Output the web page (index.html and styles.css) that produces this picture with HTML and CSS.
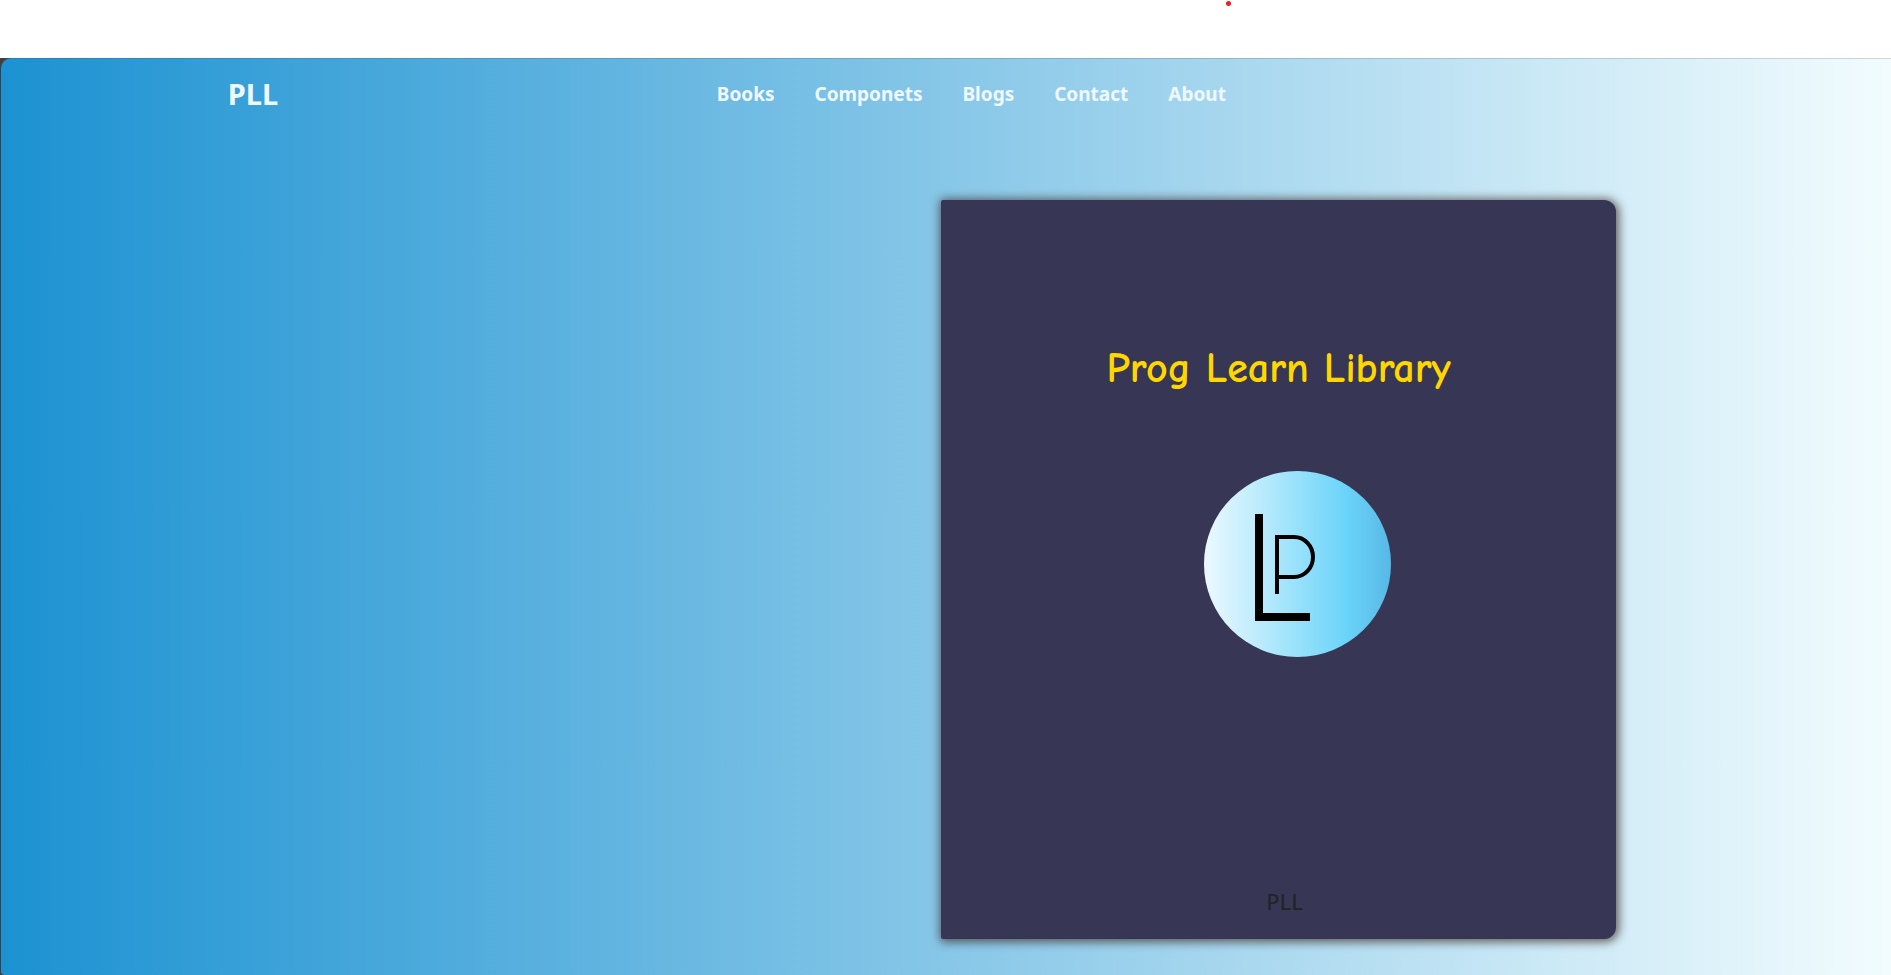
FILE: index.html
```
<!DOCTYPE html>
<html lang="en">
<head>
<meta charset="utf-8">
<meta name="viewport" content="width=device-width, initial-scale=1">
<title>Prog Learn Library</title>
<link rel="stylesheet" href="styles.css">
</head>
<body>
<div class="topbar"><span class="dot"></span></div>
<div class="stage">
  <div class="hero">
    <header class="header">
      <a class="brand" href="#">PLL</a>
      <nav class="nav">
        <a class="nav-link" href="#">Books</a>
        <a class="nav-link" href="#">Componets</a>
        <a class="nav-link" href="#">Blogs</a>
        <a class="nav-link" href="#">Contact</a>
        <a class="nav-link" href="#">About</a>
      </nav>
    </header>
    <main class="main">
      <article class="book">
        <h1 class="title">Prog Learn Library</h1>
        <svg class="logo" viewBox="0 0 187 186" role="img" aria-label="PLL logo">
          <defs>
            <linearGradient id="disc" x1="0" y1="0" x2="1" y2="0">
              <stop offset="0" stop-color="#ebf9ff"/>
              <stop offset="0.25" stop-color="#c4edfd"/>
              <stop offset="0.5" stop-color="#98e1fb"/>
              <stop offset="0.76" stop-color="#6bd4fa"/>
              <stop offset="1" stop-color="#57b8e6"/>
            </linearGradient>
          </defs>
          <ellipse cx="93.5" cy="93" rx="93.5" ry="93" fill="url(#disc)"/>
          <rect x="51" y="43" width="8" height="107"/>
          <rect x="51" y="142" width="55" height="8"/>
          <path d="M73 123V66H90A19 20 0 0 1 90 106H73" fill="none" stroke="#000" stroke-width="4"/>
        </svg>
        <p class="imprint">PLL</p>
      </article>
    </main>
  </div>
</div>
</body>
</html>
```
FILE: styles.css
```
* {
  box-sizing: border-box;
}

body {
  margin: 0;
  height: 100vh;
  display: flex;
  flex-direction: column;
  overflow: hidden;
  background: #fff;
  font-family: "Segoe UI", "Noto Sans", "Open Sans", sans-serif;
}

.topbar {
  flex: none;
  height: 58px;
  padding-left: 65%;
}

.dot {
  display: block;
  width: 5px;
  height: 5px;
  margin-top: 1px;
  margin-left: -3px;
  border-radius: 50%;
  background: #ee1c25;
}

.stage {
  flex: 1;
  display: flex;
  padding-left: 1px;
  background: #404040;
}

.hero {
  flex: 1;
  display: flex;
  flex-direction: column;
  border-top: 1px solid rgba(64, 64, 64, 0.2);
  border-radius: 10px 0 0 4px;
  background: linear-gradient(to right, #1c92d2, #f2fcfe) border-box;
}

.header {
  display: flex;
  align-items: center;
  height: 69px;
  padding-left: 12%;
  color: #f0f8ff;
  font-weight: 700;
}

.header a {
  color: inherit;
  text-decoration: none;
}

.brand {
  flex: none;
  width: 29.4%;
  font-size: 29px;
}

.nav {
  display: flex;
  gap: 40px;
  font-size: 19px;
}

.main {
  flex: 1;
  display: flex;
  padding: 72px 14.55% 36px 49.75%;
}

.book {
  flex: 1;
  display: flex;
  flex-direction: column;
  align-items: center;
  border-radius: 2px 12px 12px 2px;
  background: #373755;
  box-shadow: 1px 1px 10px 2px rgba(64, 48, 40, 0.75);
}

.title {
  margin: 139px 0 0;
  color: #ffd700;
  font-family: "Comic Sans MS", "Comic Neue", Lato, sans-serif;
  font-size: 42px;
  font-weight: 700;
  line-height: 60px;
}

.logo {
  width: 187px;
  height: 186px;
  margin: 72px 0 0 38px;
}

.imprint {
  margin: auto 0 23px 12px;
  color: #212529;
  font-size: 22px;
  font-weight: 500;
  line-height: 30px;
}
```
